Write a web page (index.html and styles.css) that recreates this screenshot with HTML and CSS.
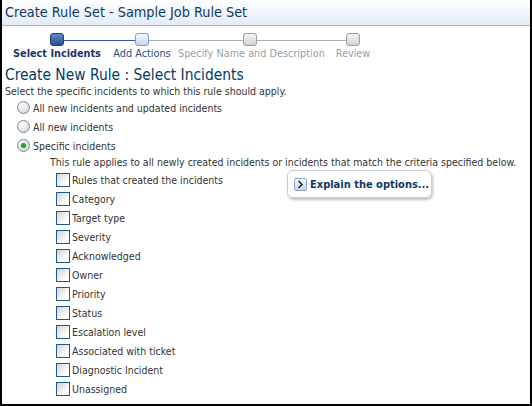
FILE: index.html
```html
<!DOCTYPE html>
<html lang="en">
<head>
  <meta charset="UTF-8" />
  <title>Create Rule Set</title>
  <link rel="stylesheet" href="styles.css">
</head>
<body>
  <div class="panel">
    <!-- Title bar -->
    <div class="title-bar">Create Rule Set - Sample Job Rule Set</div>

    <!-- Wizard train -->
    <div class="train">
      <div class="step step-1 current">
        <div class="stop"><span class="dot"></span></div>
        <div class="label">Select Incidents</div>
      </div>
      <div class="step step-2 next">
        <div class="stop"><span class="dot"></span></div>
        <div class="label">Add Actions</div>
      </div>
      <div class="step step-3 off">
        <div class="stop"><span class="dot"></span></div>
        <div class="label">Specify Name and Description</div>
      </div>
      <div class="step step-4 off">
        <div class="stop"><span class="dot"></span></div>
        <div class="label">Review</div>
      </div>
    </div>

    <h2 class="heading">Create New Rule : Select Incidents</h2>
    <p class="intro">Select the specific incidents to which this rule should apply.</p>

    <div class="radios">
      <div class="radio-row"><span class="radio"></span>All new incidents and updated incidents</div>
      <div class="radio-row"><span class="radio"></span>All new incidents</div>
      <div class="radio-row"><span class="radio checked"></span>Specific incidents</div>
    </div>

    <p class="info">This rule applies to all newly created incidents or incidents that match the criteria specified below.</p>

    <div class="options">
      <div class="checks">
        <div class="check-row"><span class="box"></span>Rules that created the incidents</div>
        <div class="check-row"><span class="box"></span>Category</div>
        <div class="check-row"><span class="box"></span>Target type</div>
        <div class="check-row"><span class="box"></span>Severity</div>
        <div class="check-row"><span class="box"></span>Acknowledged</div>
        <div class="check-row"><span class="box"></span>Owner</div>
        <div class="check-row"><span class="box"></span>Priority</div>
        <div class="check-row"><span class="box"></span>Status</div>
        <div class="check-row"><span class="box"></span>Escalation level</div>
        <div class="check-row"><span class="box"></span>Associated with ticket</div>
        <div class="check-row"><span class="box"></span>Diagnostic Incident</div>
        <div class="check-row"><span class="box"></span>Unassigned</div>
      </div>
      <div class="explain">
        <span class="explain-icon">
          <svg width="7" height="9" viewBox="0 0 7 9"><path d="M1.5 1 L5 4.5 L1.5 8" fill="none" stroke="#1b1b1b" stroke-width="1.4"/></svg>
        </span>
        Explain the options...
      </div>
    </div>
  </div>
</body>
</html>
```

FILE: styles.css
```css
* {
  margin: 0;
  padding: 0;
  box-sizing: border-box;
}

body {
  background: #000;
  font-family: "DejaVu Sans Condensed", "DejaVu Sans", sans-serif;
  font-size: 10.5px;
  color: #333;
}

.panel {
  margin-left: 2px;
  width: 528px;
  height: 404px;
  background: #fff;
  overflow: hidden;
}

.title-bar {
  height: 26px;
  padding: 4px 0 0 3px;
  font-size: 14.3px;
  color: #0b3b62;
  background: linear-gradient(to bottom, #ffffff, #e4eaf5);
  border-bottom: 1px solid #a9b6c7;
}

/* wizard train */
.train {
  display: flex;
  padding: 7px 0 0 6px;
}

.step {
  position: relative;
  text-align: center;
  white-space: nowrap;
}

.step-1 { width: 98px; }
.step-2 { width: 72px; }
.step-3 { width: 144px; }
.step-4 { width: 62px; }

.stop {
  position: relative;
  height: 14px;
}

.stop::before,
.stop::after {
  content: "";
  position: absolute;
  top: 7px;
  height: 1px;
  width: 50%;
  background: #a8b0bc;
}

.stop::before { left: 0; }
.stop::after { right: 0; }

.step-1 .stop::before,
.step-4 .stop::after {
  display: none;
}

.step-1 .stop::after,
.step-2 .stop::before {
  background: #3459a6;
}

.dot {
  position: relative;
  z-index: 1;
  display: inline-block;
  width: 14px;
  height: 13px;
  border-radius: 3px;
  vertical-align: top;
}

.current .dot {
  background: linear-gradient(to bottom, #5d8cc6, #245190);
  border: 1px solid #1d3e72;
}

.next .dot {
  background: linear-gradient(to bottom, #f2f6fd, #c7d8f3);
  border: 1px solid #7b9dd6;
}

.off .dot {
  background: linear-gradient(to bottom, #f4f4f4, #d2d2d2);
  border: 1px solid #9c9c9c;
}

.label {
  line-height: 14px;
  font-size: 10.8px;
  color: #9aa0a8;
}

.current .label {
  font-weight: bold;
  color: #1e3466;
}

.next .label {
  color: #2a4d84;
}

/* content */
.heading {
  margin: 5px 0 0 3px;
  font-size: 15.4px;
  font-weight: normal;
  line-height: 18px;
  color: #003c66;
}

.intro {
  padding-left: 3px;
  line-height: 14px;
}

.radios {
  padding-left: 15px;
}

.radio-row {
  display: flex;
  align-items: center;
  height: 19px;
  gap: 3px;
}

.radio {
  width: 13px;
  height: 13px;
  border-radius: 50%;
  border: 1px solid #7d8796;
  background: radial-gradient(circle at 35% 30%, #ffffff, #d4d8de 80%);
  display: flex;
  align-items: center;
  justify-content: center;
}

.radio.checked::after {
  content: "";
  width: 5px;
  height: 5px;
  border-radius: 50%;
  background: #23a323;
  box-shadow: 0 0 2px #8fdc8f;
}

.info {
  padding-left: 48px;
  line-height: 15px;
}

.options {
  display: flex;
  align-items: flex-start;
  padding-left: 54px;
}

.checks {
  width: 231px;
}

.check-row {
  display: flex;
  align-items: center;
  height: 19px;
  gap: 2px;
}

.box {
  width: 14px;
  height: 14px;
  border: 1px solid #1f5a8c;
  background: linear-gradient(135deg, #d2d2d2, #ffffff 75%);
}

.explain {
  display: flex;
  align-items: center;
  gap: 3px;
  width: 145px;
  height: 28px;
  padding-left: 6px;
  border: 1px solid #c8ccd8;
  border-radius: 6px;
  box-shadow: 1px 2px 3px rgba(0, 0, 0, 0.25);
  font-weight: bold;
  font-size: 11px;
  color: #0c3a64;
}

.explain-icon {
  display: flex;
  align-items: center;
  justify-content: center;
  width: 13px;
  height: 13px;
  border: 1px solid #8ea4c8;
  border-radius: 2px;
  background: linear-gradient(to bottom, #f6f8fc, #c8d5ea);
}
```
